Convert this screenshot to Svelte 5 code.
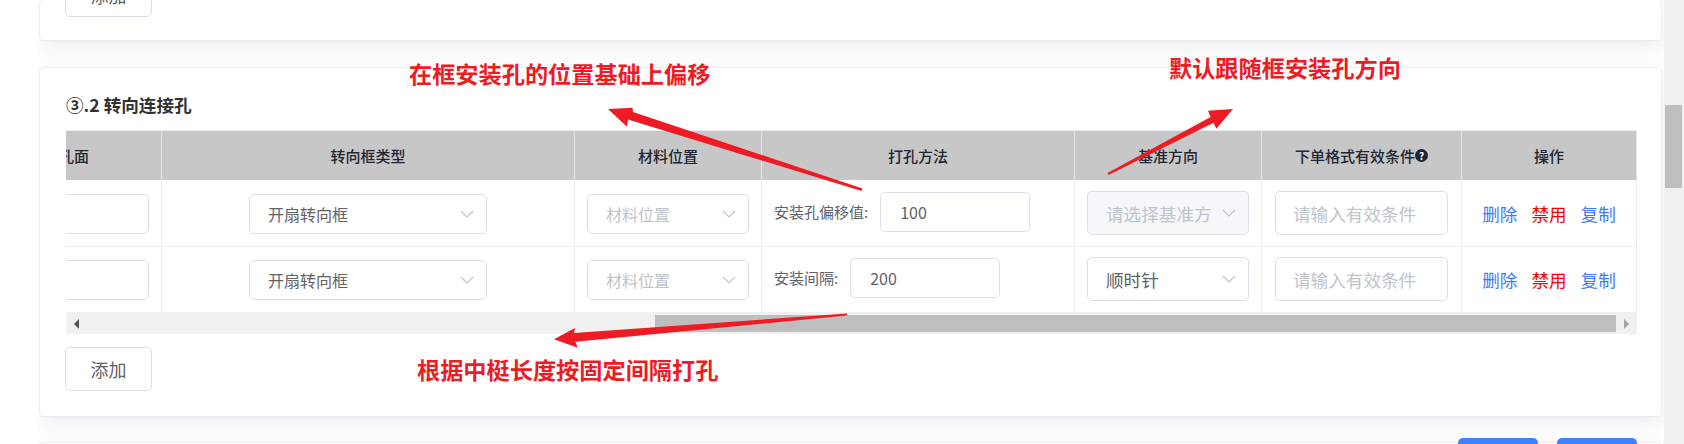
<script>
  const rows = [
    { label: '安装孔偏移值:', value: '100', base: '请选择基准方', disabled: true },
    { label: '安装间隔:', value: '200', base: '顺时针', disabled: false }
  ];
  const headers = ['打孔面', '转向框类型', '材料位置', '打孔方法', '基准方向', '下单格式有效条件', '操作'];
</script>

<div class="page">
  <main class="main">
    <section class="card first">
      <button class="btn add">添加</button>
    </section>

    <section class="card second">
      <h3 class="title">③.2 转向连接孔</h3>

      <div class="table">
        <div class="inner">
          <div class="row head">
            {#each headers as h, i}
              <div class="th">
                {h}{#if i === 5}<span class="help">?</span>{/if}
              </div>
            {/each}
          </div>

          {#each rows as r}
            <div class="row body">
              <div class="td c-stub"><div class="box stub"></div></div>
              <div class="td c-type">
                <div class="box select">
                  <span>开扇转向框</span>
                  <svg class="chev" viewBox="0 0 14 8"><path d="M1 1l6 6 6-6" /></svg>
                </div>
              </div>
              <div class="td c-mat">
                <div class="box select muted">
                  <span>材料位置</span>
                  <svg class="chev" viewBox="0 0 14 8"><path d="M1 1l6 6 6-6" /></svg>
                </div>
              </div>
              <div class="td c-method">
                <span class="lbl">{r.label}</span>
                <div class="box value">{r.value}</div>
              </div>
              <div class="td c-base">
                <div class="box select tall" class:disabled={r.disabled}>
                  <span class="clip">{r.base}</span>
                  <svg class="chev" viewBox="0 0 14 8"><path d="M1 1l6 6 6-6" /></svg>
                </div>
              </div>
              <div class="td c-cond">
                <div class="box tall ph">请输入有效条件</div>
              </div>
              <div class="td c-ops">
                <span class="link">删除</span>
                <span class="link red">禁用</span>
                <span class="link">复制</span>
              </div>
            </div>
          {/each}
        </div>

        <div class="hscroll">
          <div class="hbtn"><i class="tri left"></i></div>
          <div class="hgap"></div>
          <div class="hthumb"></div>
          <div class="hbtn end"><i class="tri right"></i></div>
        </div>
      </div>

      <button class="btn add">添加</button>
    </section>

    <section class="card third">
      <div class="footer">
        <span class="primary"></span>
        <span class="primary"></span>
      </div>
    </section>
  </main>

  <aside class="vscroll"><div class="vthumb"></div></aside>

  <svg class="marks" viewBox="0 0 1684 444" width="1684" height="444">
    <polygon points="862.5,188.5 633,112 632.5,107.7 608,109 627,126.7 628,119.5 861.5,191" />
    <polygon points="1107.5,173 1210.6,117 1208,110.7 1233,109 1216.4,128.7 1213.6,122.7 1108.5,175" />
    <polygon points="847,313.5 574,333 575,328 554,339.3 577.7,347.7 575.5,341.8 847,315.5" />
  </svg>
  <div class="note n1">在框安装孔的位置基础上偏移</div>
  <div class="note n2">默认跟随框安装孔方向</div>
  <div class="note n3">根据中梃长度按固定间隔打孔</div>
</div>

<style>
  :global(body) {
    margin: 0;
    background: #fff;
    font-family: "Noto Sans CJK SC", "Noto Sans", sans-serif;
  }
  .page {
    position: relative;
    display: flex;
    width: 1684px;
    height: 444px;
    overflow: hidden;
    padding-left: 39px;
    box-sizing: border-box;
  }
  .main {
    width: 1625px;
    height: 444px;
    overflow: hidden;
    flex: none;
  }
  .card {
    width: 1623px;
    box-sizing: border-box;
    background: #fff;
    border: 1px solid #ecedf3;
    border-radius: 5px;
    box-shadow: 0 6px 20px rgba(40, 40, 80, 0.09);
  }
  .first {
    height: 42px;
    margin-top: -1px;
    padding-left: 25px;
    overflow: hidden;
  }
  .second {
    margin-top: 26px;
    padding: 25px 24px 25px 26px;
    height: 350px;
  }
  .third {
    margin-top: 25px;
    height: 60px;
  }
  .title {
    margin: 0 0 13px;
    font-size: 17.6px;
    line-height: 24px;
    font-weight: 700;
    color: #303133;
  }
  .table {
    width: 1571px;
    overflow: hidden;
    border-top: 1px solid #ebeef5;
  }
  .inner {
    width: 1665px;
    margin-left: -94px;
  }
  .row {
    display: grid;
    grid-template-columns: 190px 413px 187px 313px 187px 200px 175px;
  }
  .head {
    height: 49px;
    background: #c7c7c7;
  }
  .th {
    display: flex;
    align-items: center;
    justify-content: center;
    font-size: 15px;
    font-weight: 500;
    color: #1f2633;
    border-right: 1px solid #e6e6e6;
    box-sizing: border-box;
  }
  .help {
    display: inline-block;
    width: 13px;
    height: 13px;
    border-radius: 50%;
    background: #1f2633;
    color: #fff;
    font-size: 10px;
    font-weight: 700;
    line-height: 13px;
    text-align: center;
  }
  .body {
    height: 66px;
  }
  .td {
    box-sizing: border-box;
    border-right: 1px solid #ebeef5;
    display: flex;
    align-items: flex-start;
    padding-top: 14px;
    font-size: 16px;
    color: #606266;
  }
  .body + .body .td {
    border-top: 1px solid #ebeef5;
    padding-top: 13px;
  }
  .box {
    box-sizing: border-box;
    border: 1px solid #dcdfe6;
    border-radius: 5px;
    background: #fff;
    height: 40px;
    display: flex;
    align-items: center;
  }
  .c-stub { padding-left: 13px; padding-right: 12px; }
  .stub { width: 100%; }
  .c-type { padding-left: 87px; padding-right: 87px; }
  .c-mat { padding-left: 12px; padding-right: 12px; }
  .select {
    width: 100%;
    padding: 0 12px 0 18px;
    justify-content: space-between;
    color: #606266;
  }
  .muted { color: #c0c4cc; }
  .chev {
    width: 14px;
    height: 8px;
    flex: none;
    fill: none;
    stroke: #c0c4cc;
    stroke-width: 1.2;
  }
  .c-method {
    padding-left: 12px;
    gap: 12px;
  }
  .body .c-method { padding-top: 12px; }
  .body + .body .c-method { padding-top: 11px; }
  .lbl {
    font-size: 15px;
    line-height: 40px;
    color: #606266;
    white-space: nowrap;
  }
  .value {
    width: 150px;
    padding-left: 19px;
    font-size: 16px;
  }
  .body .c-base { padding: 11px 12px 0; font-size: 17.6px; }
  .body + .body .c-base { padding-top: 10px; }
  .tall { height: 44px; font-size: 17.6px; }
  .c-base .select { padding-left: 18px; padding-right: 12px; gap: 6px; }
  .clip { white-space: nowrap; overflow: hidden; }
  .disabled { background: #f5f7fa; color: #c0c4cc; }
  .body .c-cond { padding: 11px 13px 0; }
  .body + .body .c-cond { padding-top: 10px; }
  .ph { width: 100%; padding-left: 17px; color: #c0c4cc; }
  .body .c-ops,
  .body + .body .c-ops {
    padding-top: 0;
    align-items: center;
    justify-content: center;
    gap: 14px;
  }
  .link { font-size: 17.6px; color: #3f7bfb; }
  .red { color: #f40000; }
  .hscroll {
    display: flex;
    height: 22px;
    background: #f0f0f0;
    padding: 3px 0 2px;
    box-sizing: border-box;
  }
  .hbtn {
    width: 20px;
    display: flex;
    align-items: center;
    justify-content: center;
    flex: none;
  }
  .hgap { width: 569px; flex: none; }
  .hthumb { width: 961px; flex: none; background: #bebebe; }
  .hbtn.end { flex: 1; }
  .tri {
    width: 0;
    height: 0;
    border-top: 5px solid transparent;
    border-bottom: 5px solid transparent;
  }
  .tri.left { border-right: 5px solid #505050; }
  .tri.right { border-left: 5px solid #a3a3a3; }
  .btn {
    font: inherit;
    font-size: 18px;
    color: #606266;
    background: #fff;
    border: 1px solid #dcdfe6;
    border-radius: 5px;
    padding: 0;
  }
  .add {
    width: 87px;
    height: 44px;
    margin: 13px 0 0 -1px;
    display: block;
  }
  .first .add { margin: -27px 0 0; }
  .footer {
    display: flex;
    justify-content: flex-end;
    gap: 19px;
    margin-top: -5px;
    padding-right: 24px;
  }
  .primary {
    width: 80px;
    height: 30px;
    border-radius: 5px;
    background: #4080ff;
  }
  .vscroll {
    width: 20px;
    flex: none;
    background: #f0f0f0;
    padding: 105px 2px 0 1px;
    box-sizing: border-box;
  }
  .vthumb {
    height: 83px;
    background: #bebebe;
  }
  .marks {
    position: absolute;
    left: 0;
    top: 0;
    fill: #ed1c24;
    pointer-events: none;
  }
  .note {
    position: absolute;
    font-size: 23.2px;
    font-weight: 700;
    line-height: 30px;
    color: #ed1c24;
    white-space: nowrap;
  }
  .n1 { left: 409px; top: 58px; }
  .n2 { left: 1169px; top: 52px; }
  .n3 { left: 417px; top: 354px; }
</style>
